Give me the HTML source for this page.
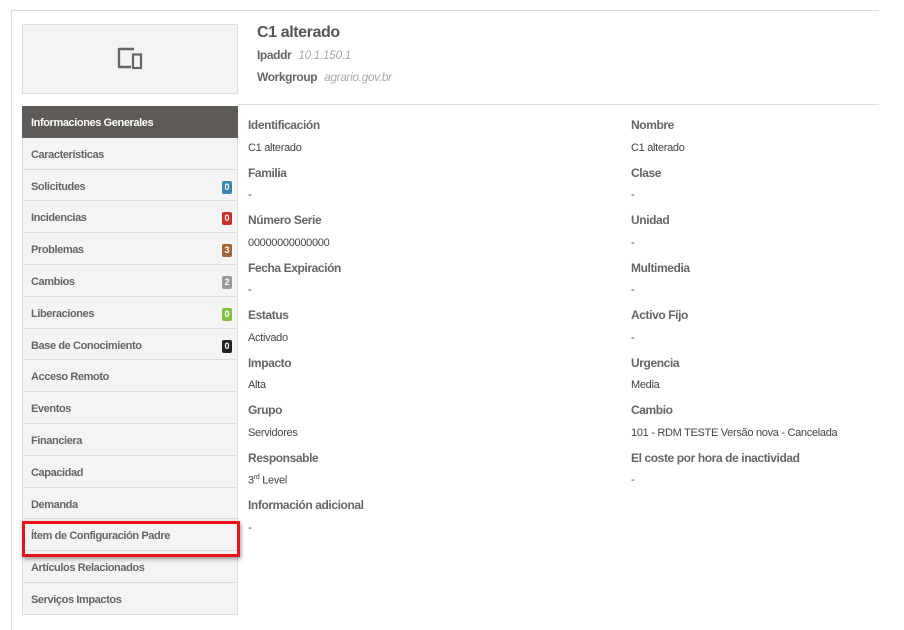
<!DOCTYPE html>
<html><head><meta charset="utf-8"><style>
*{margin:0;padding:0;box-sizing:border-box}
body{width:904px;height:626px;background:#fff;font-family:"Liberation Sans",sans-serif;position:relative;overflow:hidden;color:#555}
.frame{position:absolute;left:11px;top:10px;width:868px;height:620px;border-top:1px solid #ddd;border-left:1px solid #ddd}
.hdr{position:absolute;left:22px;top:24px;width:216px;height:70px;background:#f4f4f4;border:1px solid #ddd}
.t{position:absolute;font-size:12px;letter-spacing:-0.4px;white-space:nowrap}
.b{font-weight:bold;color:#666}
.v{color:#444;font-size:11px;letter-spacing:-0.3px}
.nav{position:absolute;left:22px;top:106px;width:216px}
.nav div{height:31.8px;line-height:35px;border:1px solid #ddd;border-top:none;background:#f4f4f4;padding-left:8px;font-size:11px;font-weight:bold;color:#666;letter-spacing:-0.4px;position:relative}
.nav div.act{background:#5f5b57;color:#fff;border-color:#5f5b57}
.bd{position:absolute;left:199px;top:11px;width:10px;height:13px;border-radius:2px;color:#fff;font-size:9px;line-height:13px;text-align:center;letter-spacing:0}
.hl{position:absolute;left:22px;top:521px;width:218px;height:36px;border:3px solid #e8131a;box-shadow:1px 2px 4px rgba(0,0,0,.4)}
.line{position:absolute;left:238px;top:104px;width:641px;height:1px;background:#ddd}
</style></head><body>
<div class="frame"></div>
<div class="hdr"><svg style="position:absolute;left:93px;top:21px" width="28" height="26" viewBox="0 0 28 26"><path d="M3 3H18M3 2V21M2 21H15" stroke="#666" stroke-width="2.4" fill="none"/><rect x="17" y="8.5" width="8" height="13.5" stroke="#666" stroke-width="2.2" fill="none"/></svg></div>
<div class="t" style="left:257px;top:24px;font-size:16px;font-weight:bold;color:#555">C1 alterado</div>
<div class="t b" style="left:257px;top:48px">Ipaddr <i style="font-weight:normal;color:#aaa;margin-left:4px">10.1.150.1</i></div>
<div class="t b" style="left:257px;top:70px">Workgroup <i style="font-weight:normal;color:#aaa;margin-left:4px">agrario.gov.br</i></div>
<div class="line"></div>
<div class="nav">
<div class="act">Informaciones Generales</div>
<div>Características</div>
<div>Solicitudes<span class="bd" style="background:#3a87ad">0</span></div>
<div>Incidencias<span class="bd" style="background:#c9302c">0</span></div>
<div>Problemas<span class="bd" style="background:#a0673a">3</span></div>
<div>Cambios<span class="bd" style="background:#999">2</span></div>
<div>Liberaciones<span class="bd" style="background:#82c341">0</span></div>
<div>Base de Conocimiento<span class="bd" style="background:#222">0</span></div>
<div>Acceso Remoto</div>
<div>Eventos</div>
<div>Financiera</div>
<div>Capacidad</div>
<div>Demanda</div>
<div>Ítem de Configuración Padre</div>
<div>Artículos Relacionados</div>
<div>Serviços Impactos</div>
</div>
<div class="hl"></div>

<div class="t b" style="left:248px;top:118px">Identificación</div><div class="t v" style="left:248px;top:142px">C1 alterado</div>
<div class="t b" style="left:631px;top:118px">Nombre</div><div class="t v" style="left:631px;top:142px">C1 alterado</div>
<div class="t b" style="left:248px;top:166px">Familia</div><div class="t v" style="left:248px;top:189px">-</div>
<div class="t b" style="left:631px;top:166px">Clase</div><div class="t v" style="left:631px;top:189px">-</div>
<div class="t b" style="left:248px;top:213px">Número Serie</div><div class="t v" style="left:248px;top:237px">00000000000000</div>
<div class="t b" style="left:631px;top:213px">Unidad</div><div class="t v" style="left:631px;top:237px">-</div>
<div class="t b" style="left:248px;top:261px">Fecha Expiración</div><div class="t v" style="left:248px;top:284px">-</div>
<div class="t b" style="left:631px;top:261px">Multimedia</div><div class="t v" style="left:631px;top:284px">-</div>
<div class="t b" style="left:248px;top:308px">Estatus</div><div class="t v" style="left:248px;top:332px">Activado</div>
<div class="t b" style="left:631px;top:308px">Activo Fijo</div><div class="t v" style="left:631px;top:332px">-</div>
<div class="t b" style="left:248px;top:356px">Impacto</div><div class="t v" style="left:248px;top:379px">Alta</div>
<div class="t b" style="left:631px;top:356px">Urgencia</div><div class="t v" style="left:631px;top:379px">Media</div>
<div class="t b" style="left:248px;top:403px">Grupo</div><div class="t v" style="left:248px;top:427px">Servidores</div>
<div class="t b" style="left:631px;top:403px">Cambio</div><div class="t v" style="left:631px;top:427px">101 - RDM TESTE Versão nova - Cancelada</div>
<div class="t b" style="left:248px;top:451px">Responsable</div><div class="t v" style="left:248px;top:474px">3<sup style="font-size:7px">rd</sup> Level</div>
<div class="t b" style="left:631px;top:451px">El coste por hora de inactividad</div><div class="t v" style="left:631px;top:474px">-</div>
<div class="t b" style="left:248px;top:498px">Información adicional</div><div class="t v" style="left:248px;top:522px">-</div>
</body></html>
